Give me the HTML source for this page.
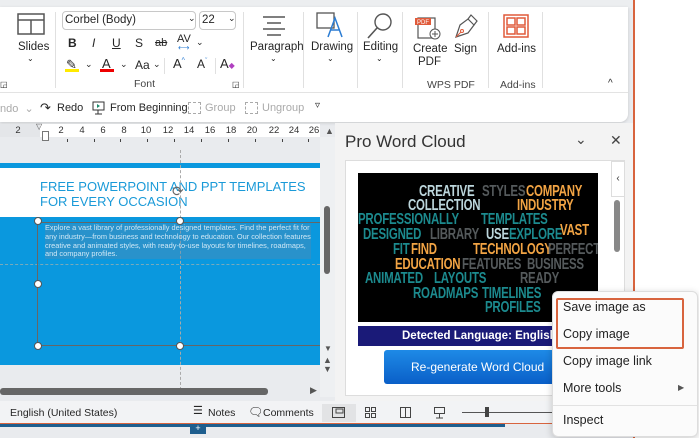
<!DOCTYPE html>
<html><head><meta charset="utf-8"><style>
*{margin:0;padding:0;box-sizing:border-box}
body{width:699px;height:438px;overflow:hidden;background:#e9ebee;font-family:"Liberation Sans",sans-serif;position:relative;color:#222}
.a{position:absolute}
.t{position:absolute;font-size:11px;color:#262626;white-space:nowrap}
.sep{position:absolute;width:1px;background:#e0e0e0}
.wc{position:absolute;font-family:"Liberation Sans",sans-serif;font-weight:bold;font-size:15.5px;line-height:14px;letter-spacing:-0.3px;white-space:nowrap;transform:scaleX(0.74);transform-origin:0 0}
.lt{color:#bcd6dc}.gr{color:#555a5c}.or{color:#f2a444}.te{color:#1c8a8e}
.mi{position:absolute;left:563px;font-size:12.5px;color:#222}
.rn{position:absolute;top:125px;font-size:9.5px;color:#333;width:14px;margin-left:-7px;text-align:center}
.tk{position:absolute;top:139px;width:1px;height:3px;background:#444}
</style></head><body>
<div class="a" style="left:0;top:0;width:699px;height:8px;background:#eceef0"></div>
<div class="a" style="left:635px;top:0;width:64px;height:438px;background:#fff"></div>
<div class="a" style="left:633px;top:0;width:2px;height:438px;background:#d8643e"></div>
<div class="a" style="left:0;top:7px;width:628px;height:115px;background:#fff;border-radius:0 0 8px 0;box-shadow:0 1px 3px rgba(0,0,0,.15)"></div>
<div class="a" style="left:0;top:92px;width:628px;height:1px;background:#e3e3e3"></div>
<svg class="a" style="left:17px;top:13px" width="28" height="22"><rect x="1" y="1" width="26" height="20" fill="none" stroke="#555" stroke-width="1.5"/><line x1="1" y1="7" x2="27" y2="7" stroke="#555" stroke-width="1.5"/><line x1="14" y1="7" x2="14" y2="21" stroke="#555" stroke-width="1.5"/></svg>
<div class="t" style="left:18px;top:41px;font-size:11.5px">Slides</div>
<div class="t" style="left:27px;top:54px;font-size:8px">⌄</div>
<div class="sep" style="left:55px;top:12px;height:76px"></div>
<div class="a" style="left:62px;top:11px;width:134px;height:19px;border:1px solid #c8c8c8;border-radius:4px"></div>
<div class="t" style="left:65px;top:14px;font-size:11.5px">Corbel (Body)</div>
<div class="t" style="left:188px;top:13px;font-size:9px">⌄</div>
<div class="a" style="left:199px;top:11px;width:37px;height:19px;border:1px solid #c8c8c8;border-radius:4px"></div>
<div class="t" style="left:202px;top:14px;font-size:11.5px">22</div>
<div class="t" style="left:228px;top:13px;font-size:9px">⌄</div>
<div class="t" style="left:68px;top:36px;font-weight:bold;font-size:12px">B</div>
<div class="t" style="left:92px;top:36px;font-style:italic;font-size:12px">I</div>
<div class="t" style="left:112px;top:36px;text-decoration:underline;font-size:12px">U</div>
<div class="t" style="left:135px;top:36px;font-size:12px">S</div>
<div class="t" style="left:155px;top:37px;text-decoration:line-through;font-size:11px">ab</div>
<div class="t" style="left:177px;top:33px;font-size:11px">AV</div>
<div class="t" style="left:178px;top:43px;font-size:8px;color:#2b7cd3">⟷</div>
<div class="t" style="left:196px;top:37px;font-size:9px">⌄</div>
<div class="t" style="left:66px;top:57px;font-size:13px">✎</div>
<div class="a" style="left:65px;top:69px;width:14px;height:3px;background:#ffea00"></div>
<div class="t" style="left:85px;top:59px;font-size:9px">⌄</div>
<div class="t" style="left:102px;top:56px;font-size:13px">A</div>
<div class="a" style="left:100px;top:69px;width:14px;height:3px;background:#e00"></div>
<div class="t" style="left:120px;top:59px;font-size:9px">⌄</div>
<div class="t" style="left:135px;top:58px;font-size:12px">Aa</div>
<div class="t" style="left:153px;top:59px;font-size:9px">⌄</div>
<div class="sep" style="left:164px;top:58px;height:16px"></div>
<div class="t" style="left:173px;top:56px;font-size:13px">A<sup style="font-size:7px;color:#2b7cd3">^</sup></div>
<div class="t" style="left:197px;top:57px;font-size:12px">A<sup style="font-size:7px;color:#2b7cd3">ˇ</sup></div>
<div class="sep" style="left:215px;top:58px;height:16px"></div>
<div class="t" style="left:220px;top:56px;font-size:13px">A<span style="color:#b040c0;font-size:8px">◆</span></div>
<div class="t" style="left:134px;top:78px;font-size:10.5px;color:#444">Font</div>
<div class="t" style="left:232px;top:80px;font-size:8px">◲</div>
<div class="t" style="left:0;top:80px;font-size:8px">◲</div>
<div class="sep" style="left:243px;top:12px;height:76px"></div>
<svg class="a" style="left:261px;top:15px" width="26" height="22"><g stroke="#555" stroke-width="1.5"><line x1="2" y1="2" x2="24" y2="2"/><line x1="6" y1="8" x2="20" y2="8"/><line x1="2" y1="14" x2="24" y2="14"/><line x1="6" y1="20" x2="20" y2="20"/></g></svg>
<div class="t" style="left:250px;top:41px;font-size:11.5px">Paragraph</div>
<div class="t" style="left:270px;top:54px;font-size:8px">⌄</div>
<div class="sep" style="left:303px;top:12px;height:76px"></div>
<svg class="a" style="left:316px;top:12px" width="28" height="26"><rect x="1" y="1" width="17" height="15" fill="none" stroke="#555" stroke-width="1.3"/><path d="M12 25 L19 6 L26 25 M15 18 H23" fill="none" stroke="#2b7cd3" stroke-width="1.5"/></svg>
<div class="t" style="left:311px;top:41px;font-size:11.5px">Drawing</div>
<div class="t" style="left:327px;top:54px;font-size:8px">⌄</div>
<div class="sep" style="left:357px;top:12px;height:76px"></div>
<svg class="a" style="left:366px;top:12px" width="28" height="28"><circle cx="17" cy="10" r="8" fill="none" stroke="#555" stroke-width="1.4"/><line x1="11" y1="16" x2="2" y2="26" stroke="#555" stroke-width="1.6"/></svg>
<div class="t" style="left:363px;top:41px;font-size:11.5px">Editing</div>
<div class="t" style="left:376px;top:54px;font-size:8px">⌄</div>
<div class="sep" style="left:402px;top:12px;height:76px"></div>
<svg class="a" style="left:413px;top:14px" width="30" height="26"><rect x="5" y="4" width="17" height="20" fill="none" stroke="#555" stroke-width="1.2"/><rect x="2" y="4" width="16" height="7" fill="#e05a3a"/><text x="4" y="10" font-size="6" fill="#fff" font-family="Liberation Sans">PDF</text><circle cx="22" cy="20" r="5" fill="#fff" stroke="#555"/><path d="M22 17v6M19 20h6" stroke="#555"/></svg>
<div class="t" style="left:413px;top:43px;font-size:11.5px">Create</div>
<div class="t" style="left:418px;top:56px;font-size:11.5px">PDF</div>
<svg class="a" style="left:452px;top:13px" width="26" height="28"><path d="M4 24 L8 12 L16 6 L22 12 L16 20 Z" fill="none" stroke="#555" stroke-width="1.2"/><path d="M16 6 L19 2 L25 8 L22 12" fill="none" stroke="#555" stroke-width="1.2"/><circle cx="10" cy="18" r="1.5" fill="none" stroke="#e05a3a"/><line x1="4" y1="24" x2="9" y2="19" stroke="#e05a3a"/></svg>
<div class="t" style="left:454px;top:43px;font-size:11.5px">Sign</div>
<div class="t" style="left:427px;top:79px;font-size:10.5px;color:#444">WPS PDF</div>
<div class="sep" style="left:488px;top:12px;height:76px"></div>
<svg class="a" style="left:503px;top:14px" width="26" height="24"><g fill="none" stroke="#e05a3a" stroke-width="1.5"><rect x="1" y="1" width="24" height="22"/><rect x="4" y="4" width="8" height="7"/><rect x="14" y="4" width="8" height="7"/><rect x="4" y="13" width="8" height="7"/><rect x="14" y="13" width="8" height="7"/></g></svg>
<div class="t" style="left:497px;top:43px;font-size:11.5px">Add-ins</div>
<div class="t" style="left:500px;top:79px;font-size:10.5px;color:#444">Add-ins</div>
<div class="sep" style="left:542px;top:12px;height:76px"></div>
<div class="t" style="left:608px;top:78px;font-size:10px">^</div>
<div class="t" style="left:0;top:102px;color:#aaa">ndo &nbsp;⌄</div>
<div class="t" style="left:40px;top:100px;font-size:13px">↷</div>
<div class="t" style="left:57px;top:102px">Redo</div>
<svg class="a" style="left:92px;top:101px" width="13" height="14"><rect x="1" y="1" width="11" height="8" fill="none" stroke="#333"/><path d="M6 9v4M3 13h7" stroke="#333"/><path d="M5 3l3 2-3 2z" fill="#1a8a6a"/></svg>
<div class="t" style="left:110px;top:102px">From Beginning</div>
<div class="a" style="left:188px;top:102px;width:13px;height:12px;border:1px dashed #aaa"></div>
<div class="t" style="left:205px;top:102px;color:#aaa">Group</div>
<div class="a" style="left:245px;top:102px;width:13px;height:12px;border:1px dashed #aaa"></div>
<div class="t" style="left:262px;top:102px;color:#aaa">Ungroup</div>
<div class="t" style="left:315px;top:100px;font-size:10px">▿</div>
<!-- ruler -->
<div class="a" style="left:0;top:124px;width:320px;height:13px;background:#fff"></div>
<div class="a" style="left:0;top:124px;width:40px;height:13px;background:#e4e6e9"></div>
<div class="rn" style="left:18px">2</div><div class="rn" style="left:61px">2</div><div class="rn" style="left:82px">4</div><div class="rn" style="left:103px">6</div><div class="rn" style="left:124px">8</div><div class="rn" style="left:146px">10</div><div class="rn" style="left:168px">12</div><div class="rn" style="left:189px">14</div><div class="rn" style="left:210px">16</div><div class="rn" style="left:231px">18</div><div class="rn" style="left:252px">20</div><div class="rn" style="left:274px">22</div><div class="rn" style="left:294px">24</div><div class="rn" style="left:314px">26</div>
<div class="tk" style="left:67px"></div><div class="tk" style="left:94px"></div><div class="tk" style="left:120px"></div><div class="tk" style="left:147px"></div><div class="tk" style="left:174px"></div><div class="tk" style="left:201px"></div><div class="tk" style="left:228px"></div><div class="tk" style="left:255px"></div><div class="tk" style="left:282px"></div><div class="tk" style="left:308px"></div>
<div class="t" style="left:36px;top:122px;font-size:8px;color:#555">▽</div>
<div class="a" style="left:42px;top:131px;width:7px;height:10px;border:1px solid #777;background:#fff"></div>
<div class="t" style="left:325px;top:126px;font-size:9px;color:#555">▲</div>
<!-- slide -->
<div class="a" style="left:0;top:163px;width:320px;height:5px;background:#0a98de"></div>
<div class="a" style="left:0;top:168px;width:320px;height:49px;background:#fff"></div>
<div class="a" style="left:0;top:217px;width:320px;height:148px;background:#0a98de"></div>
<div class="t" style="left:40px;top:179px;font-size:13px;color:#1a9ad8;line-height:15px">FREE POWERPOINT AND PPT TEMPLATES<br>FOR EVERY OCCASION</div>
<div class="a" style="left:180px;top:150px;width:0;height:240px;border-left:1px dashed #aaa"></div>
<div class="a" style="left:0;top:264px;width:320px;height:0;border-top:1px dashed #7ab"></div>
<div class="a" style="left:37px;top:222px;width:284px;height:124px;border:1px solid #666"></div>
<div class="t" style="left:45px;top:224px;font-size:7.4px;line-height:8.8px;color:#cfe8f6;background:rgba(80,140,180,.45)">Explore a vast library of professionally designed templates. Find the perfect fit for<br>any industry—from business and technology to education. Our collection features<br>creative and animated styles, with ready-to-use layouts for timelines, roadmaps,<br>and company profiles.</div>
<div class="a" style="left:34px;top:217px;width:8px;height:8px;border-radius:50%;background:#fff;border:1px solid #555"></div>
<div class="a" style="left:176px;top:217px;width:8px;height:8px;border-radius:50%;background:#fff;border:1px solid #555"></div>
<div class="a" style="left:34px;top:280px;width:8px;height:8px;border-radius:50%;background:#fff;border:1px solid #555"></div>
<div class="a" style="left:34px;top:342px;width:8px;height:8px;border-radius:50%;background:#fff;border:1px solid #555"></div>
<div class="a" style="left:176px;top:342px;width:8px;height:8px;border-radius:50%;background:#fff;border:1px solid #555"></div>
<div class="t" style="left:172px;top:183px;font-size:14px;color:#666">⟳</div>
<div class="a" style="left:320px;top:137px;width:15px;height:260px;background:#eef0f2"></div>
<div class="a" style="left:324px;top:206px;width:6px;height:68px;background:#666;border-radius:3px"></div>
<div class="t" style="left:324px;top:344px;font-size:8px;color:#555">▼</div>
<div class="t" style="left:323px;top:356px;font-size:9px;color:#555;line-height:9px">▲<br>▼</div>
<div class="a" style="left:0;top:388px;width:268px;height:7px;background:#666;border-radius:3px"></div>
<div class="t" style="left:310px;top:385px;font-size:9px;color:#555">▶</div>
<!-- status bar -->
<div class="a" style="left:0;top:401px;width:552px;height:22px;background:#f2f3f5"></div>
<div class="t" style="left:10px;top:407px;font-size:10.5px">English (United States)</div>
<div class="t" style="left:193px;top:404px;font-size:11px">☰</div>
<div class="t" style="left:208px;top:407px;font-size:10.5px">Notes</div>
<div class="t" style="left:248px;top:405px;font-size:12px">🗨</div>
<div class="t" style="left:263px;top:407px;font-size:10.5px">Comments</div>
<div class="a" style="left:322px;top:404px;width:34px;height:18px;background:#e2e3e5"></div>
<svg class="a" style="left:332px;top:406px" width="120" height="14"><g fill="none" stroke="#444"><rect x="0.5" y="1.5" width="12" height="10"/><rect x="4" y="3" width="7" height="4"/><rect x="33.5" y="1.5" width="4" height="4"/><rect x="39.5" y="1.5" width="4" height="4"/><rect x="33.5" y="7.5" width="4" height="4"/><rect x="39.5" y="7.5" width="4" height="4"/><rect x="68.5" y="1.5" width="10" height="10"/><line x1="73.5" y1="1.5" x2="73.5" y2="11.5"/><rect x="102.5" y="1.5" width="10" height="6"/><path d="M107.5 7.5v4M104 12h7"/></g></svg>
<div class="a" style="left:462px;top:412px;width:90px;height:1px;background:#555"></div>
<div class="a" style="left:485px;top:407px;width:4px;height:10px;background:#444"></div>
<div class="a" style="left:0;top:423px;width:633px;height:1px;background:#d8643e"></div>
<div class="a" style="left:0;top:424px;width:505px;height:3px;background:#1e5e8e"></div>
<div class="a" style="left:190px;top:424px;width:16px;height:10px;background:#1e5e8e;color:#fff;font-size:9px;text-align:center;line-height:8px">+</div>
<!-- pane -->
<div class="a" style="left:335px;top:123px;width:298px;height:278px;background:#f3f3f3"></div>
<div class="t" style="left:345px;top:132px;font-size:17px;color:#333">Pro Word Cloud</div>
<div class="t" style="left:575px;top:131px;font-size:14px;color:#444">⌄</div>
<div class="t" style="left:610px;top:132px;font-size:14px;color:#444">✕</div>
<div class="a" style="left:345px;top:160px;width:280px;height:236px;background:#fff;border:1px solid #ddd"></div>
<div class="a" style="left:611px;top:161px;width:14px;height:36px;background:#fff;border:1px solid #ddd;font-size:10px;text-align:center;line-height:34px;color:#333">‹</div>
<div class="a" style="left:614px;top:200px;width:6px;height:52px;background:#888;border-radius:3px"></div>
<div class="a" style="left:358px;top:173px;width:240px;height:149px;background:#000;overflow:hidden">
<div class="wc lt" style="left:61px;top:12px">CREATIVE</div>
<div class="wc gr" style="left:124px;top:12px">STYLES</div>
<div class="wc or" style="left:168px;top:12px">COMPANY</div>
<div class="wc lt" style="left:50px;top:26px">COLLECTION</div>
<div class="wc or" style="left:159px;top:26px">INDUSTRY</div>
<div class="wc te" style="left:0px;top:40px">PROFESSIONALLY</div>
<div class="wc te" style="left:123px;top:40px">TEMPLATES</div>
<div class="wc te" style="left:5px;top:55px">DESIGNED</div>
<div class="wc gr" style="left:72px;top:55px">LIBRARY</div>
<div class="wc lt" style="left:128px;top:55px">USE</div>
<div class="wc te" style="left:151px;top:55px">EXPLORE</div>
<div class="wc or" style="left:202px;top:51px">VAST</div>
<div class="wc te" style="left:35px;top:70px">FIT</div>
<div class="wc or" style="left:53px;top:70px">FIND</div>
<div class="wc or" style="left:115px;top:70px">TECHNOLOGY</div>
<div class="wc gr" style="left:190px;top:70px">PERFECT</div>
<div class="wc or" style="left:37px;top:85px">EDUCATION</div>
<div class="wc gr" style="left:104px;top:85px">FEATURES</div>
<div class="wc gr" style="left:169px;top:85px">BUSINESS</div>
<div class="wc te" style="left:7px;top:99px">ANIMATED</div>
<div class="wc te" style="left:76px;top:99px">LAYOUTS</div>
<div class="wc gr" style="left:162px;top:99px">READY</div>
<div class="wc te" style="left:55px;top:114px">ROADMAPS</div>
<div class="wc te" style="left:124px;top:114px">TIMELINES</div>
<div class="wc te" style="left:127px;top:128px">PROFILES</div>
</div>
<div class="a" style="left:358px;top:326px;width:240px;height:20px;background:#1a1a78;color:#fff;font-weight:bold;font-size:11.5px;line-height:20px;padding-left:44px;white-space:nowrap;overflow:hidden">Detected Language: English</div>
<div class="a" style="left:384px;top:350px;width:172px;height:34px;border-radius:3px;background:linear-gradient(#1e8ae6,#0a5fc8);color:#fff;font-size:12px;line-height:34px;padding-left:27px;white-space:nowrap;overflow:hidden">Re-generate Word Cloud</div>
<!-- context menu -->
<div class="a" style="left:552px;top:291px;width:146px;height:146px;background:#fbfbfb;border:1px solid #ddd;border-radius:6px;box-shadow:0 2px 8px rgba(0,0,0,.2)"></div>
<div class="a" style="left:556px;top:298px;width:128px;height:51px;border:2px solid #d8643e;border-radius:2px"></div>
<div class="mi" style="top:300px">Save image as</div>
<div class="mi" style="top:327px">Copy image</div>
<div class="mi" style="top:354px">Copy image link</div>
<div class="mi" style="top:381px">More tools</div>
<div class="t" style="left:678px;top:383px;font-size:8px;color:#555">▶</div>
<div class="a" style="left:553px;top:405px;width:144px;height:1px;background:#e2e2e2"></div>
<div class="mi" style="top:413px">Inspect</div>
</body></html>
